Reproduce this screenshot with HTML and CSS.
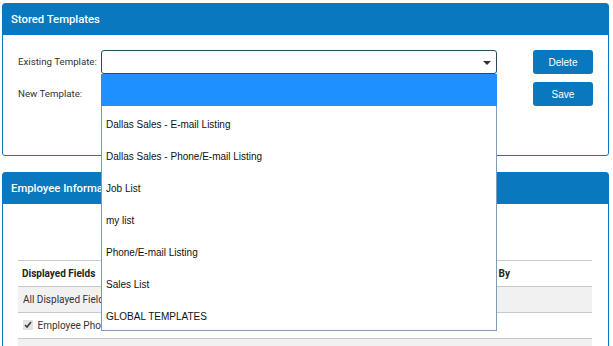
FILE: index.html
```html
<!DOCTYPE html>
<html lang="en">
<head>
    <meta charset="UTF-8">
    <title>Stored Templates</title>
    <link rel="stylesheet" href="styles.css">
</head>
<body>

    <!-- STORED TEMPLATES -->
    <div class="panel">
        <div class="panel-head">Stored Templates</div>
        <div class="panel-body templates">
            <label class="field-label">Existing Template:</label>
            <div class="select-wrap">
                <div class="select">
                    <span class="arrow"></span>
                </div>
                <ul class="dropdown">
                    <li class="selected"></li>
                    <li>Dallas Sales - E-mail Listing</li>
                    <li>Dallas Sales - Phone/E-mail Listing</li>
                    <li>Job List</li>
                    <li>my list</li>
                    <li>Phone/E-mail Listing</li>
                    <li>Sales List</li>
                    <li>GLOBAL TEMPLATES</li>
                </ul>
            </div>
            <button class="btn">Delete</button>

            <label class="field-label">New Template:</label>
            <input type="text" class="text-input">
            <button class="btn">Save</button>
        </div>
    </div>

    <!-- EMPLOYEE INFORMATION -->
    <div class="panel">
        <div class="panel-head">Employee Information</div>
        <div class="panel-body info">
            <div class="fields-table">
                <div class="row head">
                    <div class="cell">Displayed Fields</div>
                    <div class="cell">Sort By</div>
                </div>
                <div class="row shade">
                    <div class="cell">All Displayed Fields</div>
                    <div class="cell"></div>
                </div>
                <div class="row">
                    <div class="cell"><input type="checkbox" checked> Employee Photo</div>
                    <div class="cell"></div>
                </div>
                <div class="row shade">
                    <div class="cell"></div>
                    <div class="cell"></div>
                </div>
            </div>
        </div>
    </div>

</body>
</html>
```

FILE: styles.css
```css
* { margin: 0; padding: 0; box-sizing: border-box; }

body {
    background: #fff;
    font-family: Roboto, 'Liberation Sans', sans-serif;
    font-size: 10px;
    color: #333;
    padding: 3px 4px 0 2px;
}

.panel {
    border: 1px solid #0a78be;
    border-radius: 3px;
    margin-bottom: 16px;
}

.panel-head {
    background: #0a78be;
    color: #fff;
    height: 31px;
    line-height: 31px;
    padding-left: 8px;
    font-size: 11.3px;
    font-weight: 500;
}

.panel-body {
    padding: 15px 15px 0 15px;
}

/* form grid */
.templates {
    height: 120px;
    display: grid;
    grid-template-columns: 83px 396px 96px;
    grid-template-rows: 24px 24px;
    row-gap: 8px;
}

.templates .btn {
    margin-left: 36px;
}

.field-label {
    line-height: 24px;
    font-size: 9.7px;
    white-space: nowrap;
    color: #333;
}

.select-wrap {
    position: relative;
    z-index: 5;
}

.select {
    height: 24px;
    border: 1px solid #254f60;
    border-radius: 3px;
    background: #fff;
    position: relative;
}

.arrow {
    position: absolute;
    right: 5px;
    top: 10px;
    border-left: 4px solid transparent;
    border-right: 4px solid transparent;
    border-top: 4px solid #333;
}

.dropdown {
    list-style: none;
    position: absolute;
    top: 24px;
    left: 0;
    width: 396px;
    background: #fff;
    border: 1px solid #7f9bbb;
    border-top: none;
    font-family: 'Liberation Sans', Arial, sans-serif;
    font-size: 10px;
    color: #111;
}

.dropdown li {
    height: 32px;
    line-height: 37px;
    padding-left: 4px;
}

.dropdown li.selected {
    background: #1e90ff;
    margin: 0 -1px;
}

.text-input {
    height: 24px;
    border: 1px solid #ccc;
    border-radius: 3px;
}

.btn {
    width: 60px;
    height: 24px;
    border: none;
    border-radius: 3px;
    background: #0a78be;
    color: #fff;
    font-family: 'Liberation Sans', Arial, sans-serif;
    font-size: 10px;
    cursor: pointer;
}

/* employee table */
.info {
    padding: 56px 16px 0 15px;
    height: 200px;
}

.fields-table {
    border-top: 1px solid #c8c8c8;
}

.row {
    display: grid;
    grid-template-columns: 450px 1fr;
    height: 26px;
    border-bottom: 1px solid #c8c8c8;
}

.row.shade {
    background: #f1f1f1;
}

.cell {
    line-height: 25px;
    padding-left: 5px;
    color: #333;
    white-space: nowrap;
    overflow: hidden;
}

.row.head .cell {
    font-weight: bold;
    color: #222;
    padding-left: 4px;
}

.row.head .cell + .cell {
    padding-left: 9px;
}

.cell input {
    width: 10px;
    height: 10px;
    vertical-align: -1px;
    margin-right: 2px;
    accent-color: #e4e4e4;
}
```
